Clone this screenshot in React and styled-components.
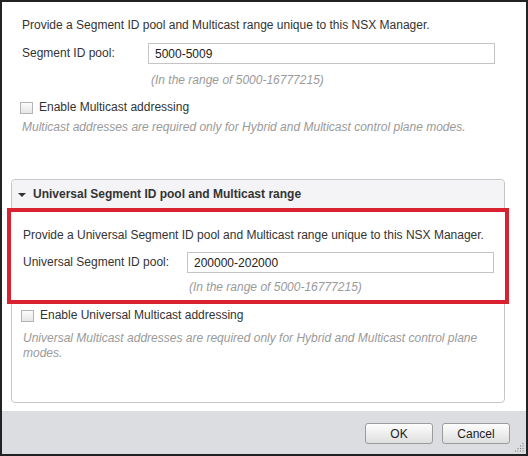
import React from "react";
import styled, { createGlobalStyle } from "styled-components";

const GlobalStyle = createGlobalStyle`
  html, body {
    margin: 0;
    padding: 0;
    background: #fff;
  }
  * {
    box-sizing: border-box;
  }
`;

const Dialog = styled.div`
  position: relative;
  width: 528px;
  height: 456px;
  border: 2px solid #222;
  background: #fff;
  display: flex;
  flex-direction: column;
  font-family: "Liberation Sans", Arial, sans-serif;
  font-size: 12px;
  color: #333;
`;

const Section = styled.div`
  padding: 16px 20px 0 20px;
`;

const Text = styled.div`
  line-height: 15px;
  white-space: nowrap;
`;

const Hint = styled.div`
  line-height: 15px;
  font-style: italic;
  color: #9a9a9a;
  margin-top: ${(p) => p.$top || 0}px;
  margin-left: ${(p) => p.$left || 0}px;
  max-width: ${(p) => (p.$max ? p.$max + "px" : "none")};
`;

const FieldRow = styled.div`
  display: flex;
  align-items: center;
  margin-top: ${(p) => p.$top}px;
  height: 21px;
`;

const Label = styled.label`
  width: ${(p) => p.$width}px;
  flex-shrink: 0;
  line-height: 15px;
`;

const Input = styled.input`
  width: ${(p) => p.$width}px;
  height: 21px;
  border: 1px solid #c4c4c4;
  padding: 0 6px;
  font-family: "Liberation Sans", Arial, sans-serif;
  font-size: 12px;
  color: #222;
  background: #fff;
  outline: none;
`;

const CheckRow = styled.label`
  display: flex;
  align-items: center;
  gap: 6px;
  margin-top: ${(p) => p.$top}px;
  margin-left: -2px;
  height: 15px;
  line-height: 15px;
`;

const Box = styled.span`
  width: 13px;
  height: 12px;
  border: 1px solid #b4b4b4;
  background: linear-gradient(#fbfbfb, #e6e6e6);
  display: inline-block;
`;

const Panel = styled.div`
  margin: 44px 21px 8px 9px;
  border: 1px solid #c6c6c6;
  border-radius: 4px;
`;

const PanelHeader = styled.div`
  height: 28px;
  display: flex;
  align-items: center;
  gap: 7px;
  padding-left: 6px;
  background: #f4f4f6;
  border-radius: 4px 4px 0 0;
  font-weight: bold;
  color: #333;
`;

const Caret = styled.span`
  width: 0;
  height: 0;
  border-left: 4px solid transparent;
  border-right: 4px solid transparent;
  border-top: 4px solid #333;
  margin-top: 1px;
`;

const Highlight = styled.div`
  position: relative;
  margin: 0 -5px;
  border: 4px solid #d8222f;
  padding: 16px 11px 5px 12px;
  background: #fff;
`;

const PanelBody = styled.div`
  padding: 0 12px 41px 11px;
`;

const Footer = styled.div`
  flex: 1;
  background: #dcdde0;
  display: flex;
  justify-content: flex-end;
  align-items: flex-start;
  gap: 9px;
  padding: 12px 16px 0 0;
`;

const Button = styled.button`
  width: 68px;
  height: 21px;
  border: 1px solid #9c9c9c;
  border-radius: 3px;
  background: linear-gradient(#fdfdfd 0%, #f0f0f0 45%, #dedede 100%);
  font-family: "Liberation Sans", Arial, sans-serif;
  font-size: 12px;
  color: #222;
  padding: 0;
`;

const Grip = styled.svg`
  position: absolute;
  right: 1px;
  bottom: 1px;
`;

function ResizeGrip() {
  const dots = [];
  for (let r = 0; r < 4; r++) {
    for (let c = 3 - r; c < 4; c++) {
      dots.push(<rect key={r + "-" + c} x={c * 2.5} y={r * 2.5} width="1" height="1" fill="#777" />);
    }
  }
  return (
    <Grip width="10" height="10" viewBox="0 0 10 10">
      {dots}
    </Grip>
  );
}

export default function App() {
  return (
    <>
      <GlobalStyle />
      <Dialog>
        <Section>
          <Text>Provide a Segment ID pool and Multicast range unique to this NSX Manager.</Text>
          <FieldRow $top={10}>
            <Label $width={126}>Segment ID pool:</Label>
            <Input $width={347} defaultValue="5000-5009" />
          </FieldRow>
          <Hint $top={9} $left={129}>(In the range of 5000-16777215)</Hint>
          <CheckRow $top={12}>
            <Box />
            Enable Multicast addressing
          </CheckRow>
          <Hint $top={5}>Multicast addresses are required only for Hybrid and Multicast control plane modes.</Hint>
        </Section>

        <Panel>
          <PanelHeader>
            <Caret />
            Universal Segment ID pool and Multicast range
          </PanelHeader>
          <Highlight>
            <Text>Provide a Universal Segment ID pool and Multicast range unique to this NSX Manager.</Text>
            <FieldRow $top={9}>
              <Label $width={164}>Universal Segment ID pool:</Label>
              <Input $width={307} defaultValue="200000-202000" />
            </FieldRow>
            <Hint $top={7} $left={166}>(In the range of 5000-16777215)</Hint>
          </Highlight>
          <PanelBody>
            <CheckRow $top={4}>
              <Box />
              Enable Universal Multicast addressing
            </CheckRow>
            <Hint $top={8} $max={470}>
              Universal Multicast addresses are required only for Hybrid and Multicast control plane modes.
            </Hint>
          </PanelBody>
        </Panel>

        <Footer>
          <Button>OK</Button>
          <Button>Cancel</Button>
        </Footer>
        <ResizeGrip />
      </Dialog>
    </>
  );
}
